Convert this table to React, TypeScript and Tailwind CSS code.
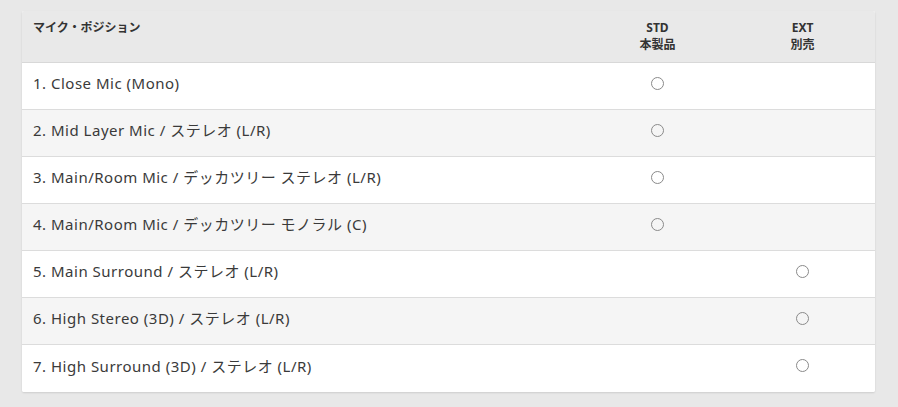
// mic position table
const rows = [
  { label: '1. Close Mic (Mono)', std: true, ext: false },
  { label: '2. Mid Layer Mic / ステレオ (L/R)', std: true, ext: false },
  { label: '3. Main/Room Mic / デッカツリー ステレオ (L/R)', std: true, ext: false },
  { label: '4. Main/Room Mic / デッカツリー モノラル (C)', std: true, ext: false },
  { label: '5. Main Surround / ステレオ (L/R)', std: false, ext: true },
  { label: '6. High Stereo (3D) / ステレオ (L/R)', std: false, ext: true },
  { label: '7. High Surround (3D) / ステレオ (L/R)', std: false, ext: true },
];

function Mark() {
  return <span className="inline-block size-[13px] rounded-full border border-[#8a8a8a] bg-transparent" />;
}

export default function App() {
  return (
    <div className="min-h-[407px] w-full bg-[#e8e8e8] px-[22px] pt-[11px] font-['Noto_Sans','Noto_Sans_CJK_JP',sans-serif] text-[#333]">
      <div className="w-[853px] overflow-hidden rounded-[2px] bg-white shadow-[0_1px_2px_rgba(0,0,0,0.12)]">
        <div className="flex h-[52px] border-b border-[#d8d8d8] bg-[#e9e9e9] text-[12px] leading-[17px] font-bold">
          <div className="flex-1 pl-[11px] pt-[8px]">マイク・ポジション</div>
          <div className="w-[145px] pt-[8px] text-center">
            STD
            <br />
            本製品
          </div>
          <div className="w-[145px] pt-[8px] text-center">
            EXT
            <br />
            別売
          </div>
        </div>
        {rows.map((row, i) => (
          <div
            key={i}
            className={`flex h-[47px] items-center ${i < rows.length - 1 ? 'border-b border-[#dcdcdc]' : ''} ${
              i % 2 === 1 ? 'bg-[#f5f5f5]' : 'bg-white'
            }`}
          >
            <div className="flex-1 pl-[11px] pb-[5px] text-[15px] tracking-[0.5px] text-[#3a3a3a]">{row.label}</div>
            <div className="flex w-[145px] justify-center pb-[6px]">{row.std && <Mark />}</div>
            <div className="flex w-[145px] justify-center pb-[6px]">{row.ext && <Mark />}</div>
          </div>
        ))}
      </div>
    </div>
  );
}
